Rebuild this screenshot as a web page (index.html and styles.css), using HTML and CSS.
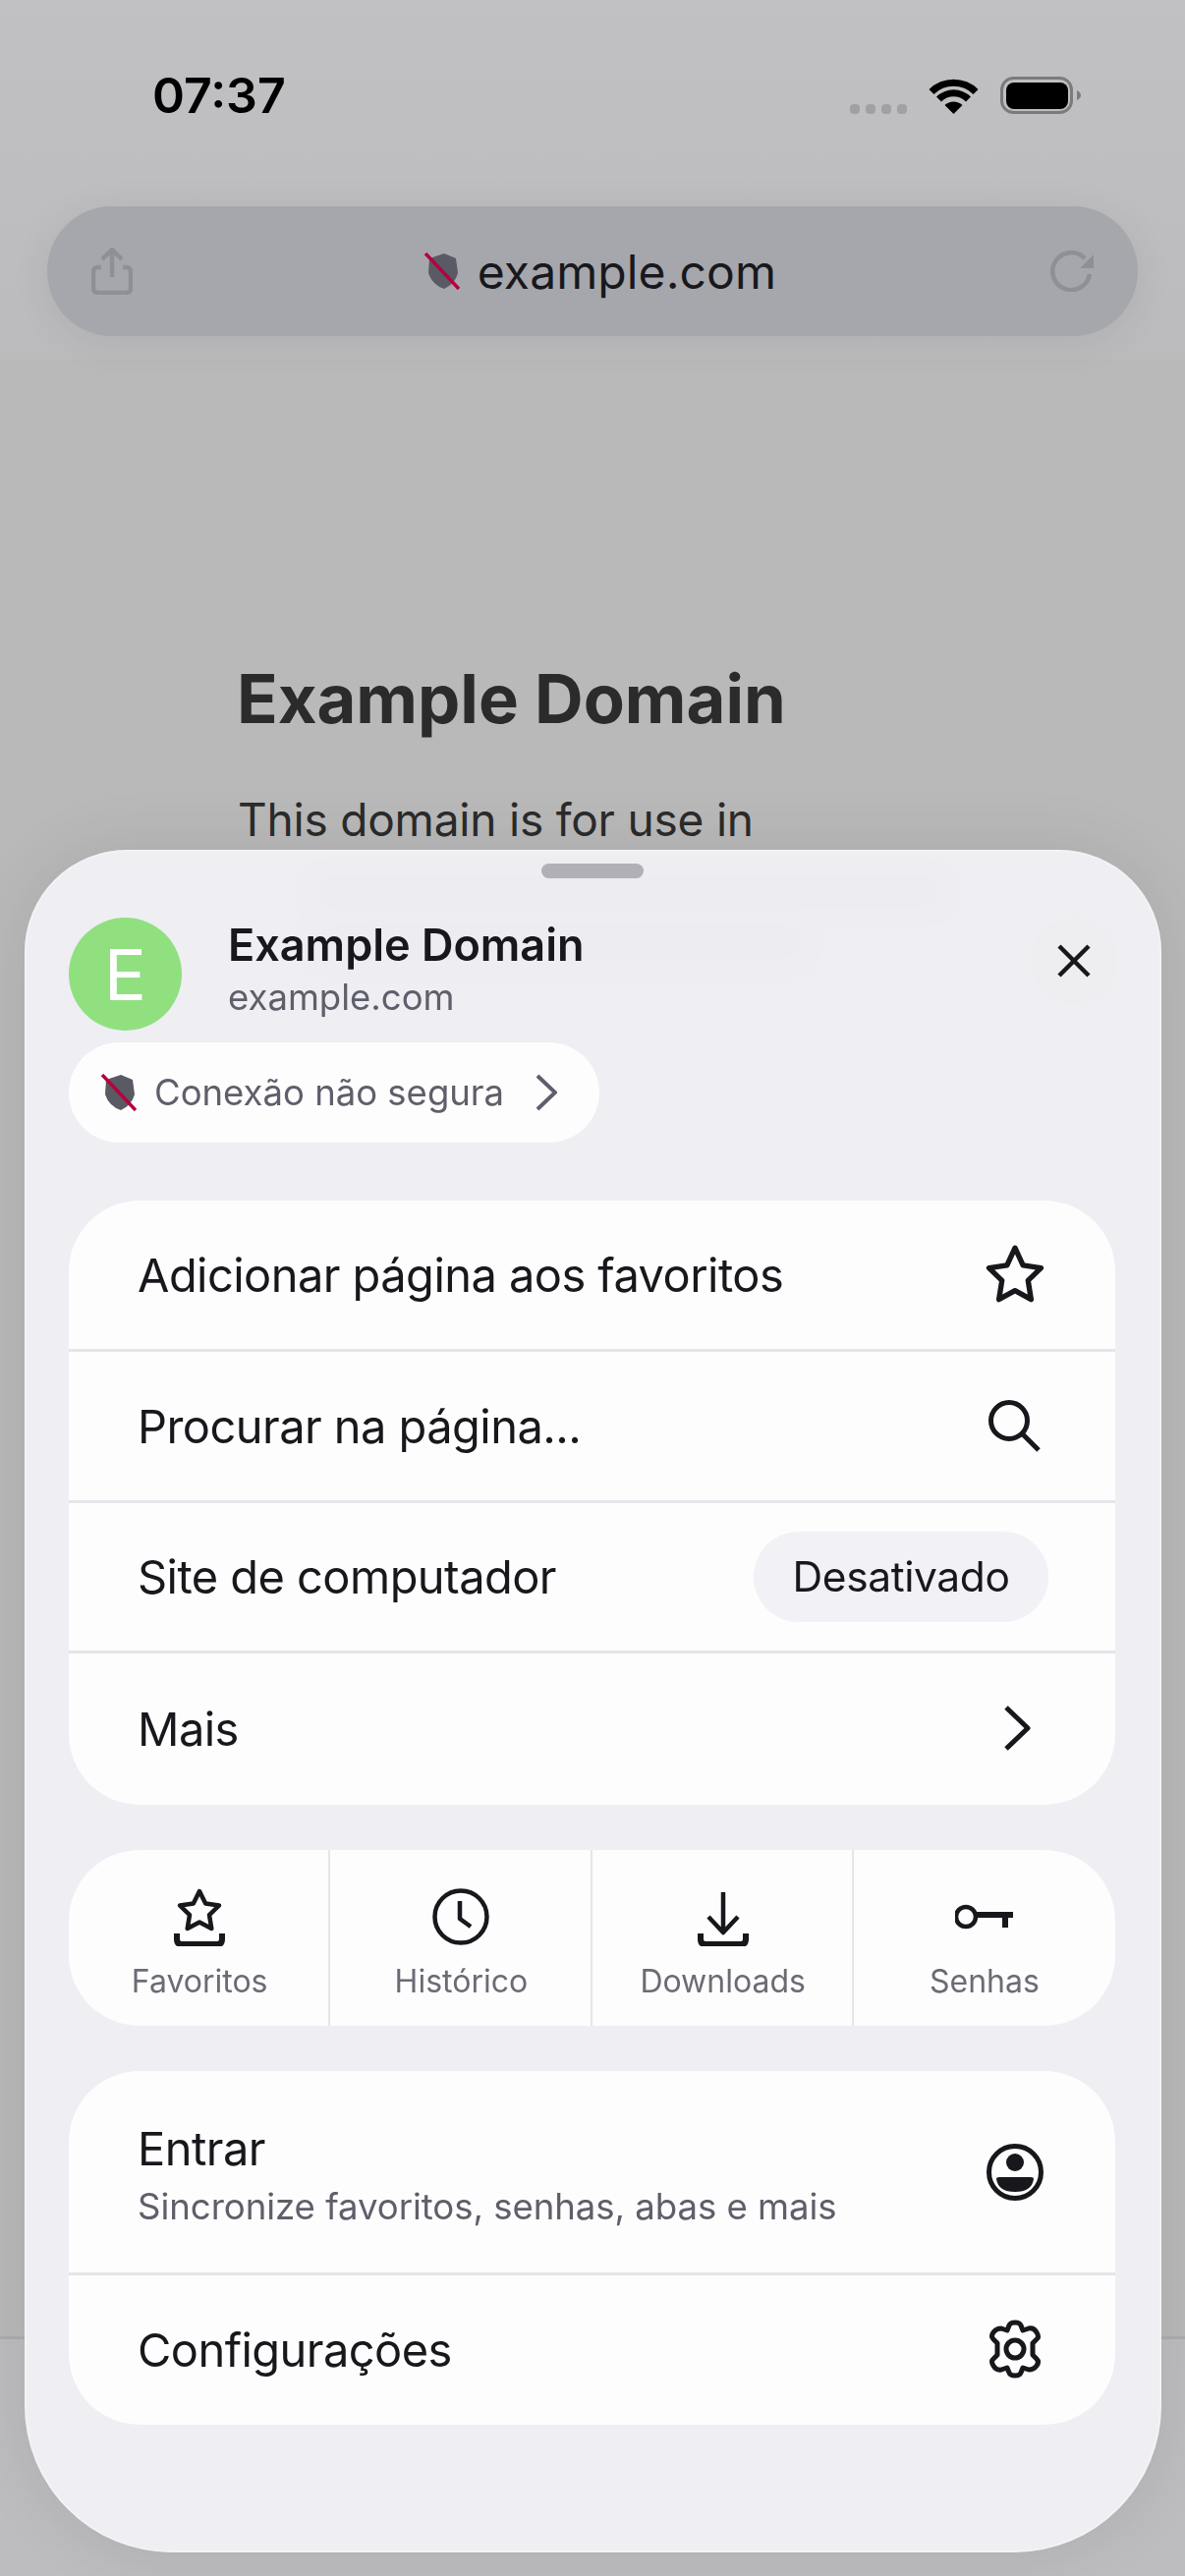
FILE: index.html
```html
<!DOCTYPE html>
<html lang="pt-BR">
<head>
  <meta charset="UTF-8">
  <title>Example Domain</title>
  <meta name="viewport" content="width=device-width,initial-scale=1"/>
  <link rel="stylesheet" href="styles.css">
</head>
<body>
<div class="page">
  <header class="top">
    <div class="status">
      <span class="time">07:37</span>
      <div class="status-icons">
        <div class="signal"><i></i><i></i><i></i><i></i></div>
        <svg class="wifi" viewBox="0 0 51 37">
          <path d="M.5 12A35.400 35.400 0 0 1 50.500 12L45.500 17A28.300 28.300 0 0 0 5.500 17Z"/>
          <path d="M8 19.500A25 25 0 0 1 43 19.500L38 24.500A17.500 17.500 0 0 0 13 24.500Z"/>
          <path d="M16.500 28A13 13 0 0 1 34.500 28L25.500 37Z"/>
        </svg>
        <svg class="battery" viewBox="0 0 82 38">
          <rect class="battery-edge" x="1.500" y="1.500" width="71" height="35" rx="12"/>
          <rect class="battery-fill" x="6" y="6" width="63" height="27" rx="8"/>
          <path class="battery-nub" d="M78 14q4 2 4 5t-4 5z"/>
        </svg>
      </div>
    </div>
    <div class="urlbar">
      <svg class="bar-icon share" viewBox="0 0 42 48">
        <path d="M10 20H7Q2 20 2 25V41Q2 46 7 46H35Q40 46 40 41V25Q40 20 35 20H32"/>
        <path d="M21 30V2M11 12 21 2 31 12"/>
      </svg>
      <div class="url">
        <svg class="shield" viewBox="0 0 36 38">
          <path class="shield-body" d="M5 6 20 1 32 6 34 21Q31 32 20 37 8 33 4 21Z"/>
          <path class="shield-slash" d="M1 1 35 37"/>
        </svg>
        <span>example.com</span>
      </div>
      <svg class="bar-icon reload" viewBox="0 0 44 42">
        <path d="M40 24A19 19 0 1 1 35 8"/>
        <path class="bar-arrow" d="M44 4V18H30Z"/>
      </svg>
    </div>
  </header>

  <main class="doc">
    <h1>Example Domain</h1>
    <p>This domain is for use in</p>
    <div class="ghost-line"></div>
    <div class="ghost-line ghost-short"></div>
  </main>

  <div class="bottom-bar"></div>

  <section class="sheet">
    <div class="grabber"></div>
    <div class="site">
      <div class="avatar">E</div>
      <div class="site-text">
        <div class="site-title">Example Domain</div>
        <div class="site-url">example.com</div>
      </div>
      <button class="close">
        <svg viewBox="0 0 34 34"><path d="M2 2 32 32M32 2 2 32"/></svg>
      </button>
    </div>
    <div class="secure">
      <svg class="shield" viewBox="0 0 36 38">
        <path class="shield-body" d="M5 6 20 1 32 6 34 21Q31 32 20 37 8 33 4 21Z"/>
        <path class="shield-slash" d="M1 1 35 37"/>
      </svg>
      <span>Conexão não segura</span>
      <svg class="secure-arrow" viewBox="0 0 22 38"><path d="M2 2 20 19 2 36"/></svg>
    </div>

    <div class="card">
      <div class="row">
        <span>Adicionar página aos favoritos</span>
        <svg class="row-icon" viewBox="2 2 56 56">
          <path d="M30 5 37.600 21.500 54.700 24 42.400 36 45.300 54 30 45.500 14.700 54 17.600 36 5.300 24 22.400 21.500Z"/>
        </svg>
      </div>
      <div class="row">
        <span>Procurar na página...</span>
        <svg class="row-icon" viewBox="0 0 60 60">
          <circle cx="24" cy="25" r="18.500"/>
          <path d="M37 38 54 55"/>
        </svg>
      </div>
      <div class="row">
        <span>Site de computador</span>
        <span class="chip">Desativado</span>
      </div>
      <div class="row">
        <span>Mais</span>
        <svg class="row-icon" viewBox="0 0 60 60">
          <path d="M21 9 43 30 21 51"/>
        </svg>
      </div>
    </div>

    <div class="card shortcuts">
      <div class="shortcut">
        <svg class="shortcut-icon" viewBox="0 0 60 60">
          <path d="M30 4 36.200 16.500 50 18.500 40 28.200 42.300 42 30 35.500 17.700 42 20 28.200 10 18.500 23.800 16.500Z"/>
          <path class="heavy" d="M7 47V53Q7 58 12 58H48Q53 58 53 53V47"/>
        </svg>
        <span>Favoritos</span>
      </div>
      <div class="shortcut">
        <svg class="shortcut-icon" viewBox="0 0 60 60">
          <circle cx="30" cy="30" r="26.500"/>
          <path d="M29 14V32L40 40"/>
        </svg>
        <span>Histórico</span>
      </div>
      <div class="shortcut">
        <svg class="shortcut-icon" viewBox="0 0 60 60">
          <path d="M30 5V46M15 30 30 46 45 30"/>
          <path class="heavy" d="M7 47V53Q7 58 12 58H48Q53 58 53 53V47"/>
        </svg>
        <span>Downloads</span>
      </div>
      <div class="shortcut">
        <svg class="shortcut-icon" viewBox="0 0 60 60">
          <circle cx="11" cy="30" r="10"/>
          <path class="heavy" d="M21 28H59M51 28V41"/>
        </svg>
        <span>Senhas</span>
      </div>
    </div>

    <div class="card">
      <div class="row row-tall">
        <div class="row-text">
          <span>Entrar</span>
          <span class="row-sub">Sincronize favoritos, senhas, abas e mais</span>
        </div>
        <svg class="row-icon" viewBox="0 0 60 60">
          <circle cx="30" cy="30" r="26.500"/>
          <circle class="solid" cx="30" cy="20" r="9"/>
          <path class="solid" d="M11 37Q11 35 14 35H46Q49 35 49 37 47 50 30 50 13 50 11 37Z"/>
        </svg>
      </div>
      <div class="row row-last">
        <span>Configurações</span>
        <svg class="row-icon" viewBox="0 0 60 60">
          <path d="M24 6Q25 3 30 3T36 6L38 11 44 9Q49 8 52 13T52 20L48 24 48 36 52 40Q55 43 52 47T44 51L38 49 36 54Q35 57 30 57T24 54L22 49 16 51Q11 52 8 47T8 40L12 36 12 24 8 20Q5 17 8 13T16 9L22 11Z"/>
          <circle cx="30" cy="30" r="9"/>
        </svg>
      </div>
    </div>
  </section>
</div>
</body>
</html>
```

FILE: styles.css
```css
* {
  box-sizing: border-box;
}

html,
body {
  margin: 0;
  padding: 0;
}

body {
  font-family: Inter, "Noto Sans", sans-serif;
  color: #17171c;
}

.page {
  position: relative;
  display: flex;
  flex-direction: column;
  width: 1206px;
  height: 2622px;
  overflow: hidden;
  background: #b9b9b9;
}

/* browser chrome */
.top {
  height: 366px;
  padding: 78px 48px 0;
  background: linear-gradient(#c1c1c3, #bbbbbd);
}

.status {
  display: flex;
  align-items: center;
  justify-content: space-between;
  height: 38px;
  padding: 0 58px 0 107px;
}

.time {
  font-size: 50px;
  font-weight: 600;
  color: #000;
  letter-spacing: 0;
}

.status-icons {
  display: flex;
  align-items: flex-end;
  gap: 22px;
}

.signal {
  display: flex;
  gap: 6px;
}

.signal i {
  width: 10px;
  height: 10px;
  border-radius: 4px;
  background: #a1a1a2;
}

.wifi {
  width: 51px;
  height: 37px;
  fill: #000;
}

.battery {
  width: 82px;
  height: 38px;
}

.battery-edge {
  fill: none;
  stroke: #7b7b7c;
  stroke-width: 3;
}

.battery-fill {
  fill: #000;
}

.battery-nub {
  fill: #7b7b7c;
}

.urlbar {
  display: flex;
  align-items: center;
  justify-content: space-between;
  height: 132px;
  margin-top: 94px;
  padding: 0 45px;
  border-radius: 66px;
  background: #a6a7ac;
  box-shadow: 0 6px 40px rgba(0, 0, 0, .07);
}

.bar-icon {
  fill: none;
  stroke: #8f9095;
  stroke-width: 4.500;
}

.bar-arrow {
  fill: #8f9095;
  stroke: none;
}

.share {
  width: 42px;
  height: 48px;
}

.reload {
  width: 44px;
  height: 42px;
}

.url {
  display: flex;
  align-items: center;
  gap: 18px;
  margin-left: 18px;
  font-size: 48px;
  letter-spacing: .1px;
  color: #18181d;
}

.shield {
  flex: none;
  width: 36px;
  height: 38px;
}

.shield-body {
  fill: #5a5a64;
}

.shield-slash {
  fill: none;
  stroke: #b5003f;
  stroke-width: 3.500;
}

/* page behind the sheet */
.doc {
  flex: 1;
  padding: 0 0 0 241px;
  color: #2b2b2b;
}

.doc h1 {
  margin: 306px 0 0;
  font-size: 68.700px;
  line-height: 78px;
  font-weight: 700;
}

.doc p {
  margin: 50px 0 0 1px;
  font-size: 46px;
  line-height: 68px;
  letter-spacing: -.2px;
}

.ghost-line {
  width: 640px;
  height: 28px;
  margin: 26px 0 0 78px;
  background: #8a8a8a;
}

.ghost-short {
  width: 500px;
  margin-top: 24px;
}

.bottom-bar {
  height: 244px;
  border-top: 3px solid #adadb0;
  background: #bdbdbf;
}

/* sheet */
.sheet {
  position: absolute;
  top: 865px;
  left: 25px;
  right: 24px;
  bottom: 24px;
  padding: 14px 47px 0 45px;
  border-radius: 104px 104px 150px 150px;
  background: rgba(240, 240, 245, .95);
  backdrop-filter: blur(14px);
  box-shadow: 0 0 70px rgba(0, 0, 0, .09), inset 0 0 0 2px rgba(255, 255, 255, .3);
}

.grabber {
  width: 104px;
  height: 15px;
  margin: 0 auto;
  border-radius: 8px;
  background: #b0b0b6;
}

.site {
  display: flex;
  align-items: center;
  gap: 47px;
  margin-top: 40px;
}

.avatar {
  display: flex;
  align-items: center;
  justify-content: center;
  flex: none;
  width: 115px;
  height: 115px;
  border-radius: 50%;
  background: #90e080;
  color: #fff;
  font-size: 72px;
}

.site-text {
  flex: 1;
  margin-top: -12px;
}

.site-title {
  font-size: 45px;
  line-height: 56px;
  font-weight: 600;
}

.site-url {
  margin-top: 2px;
  font-size: 36.500px;
  line-height: 46px;
  color: #5f5f6b;
}

.close {
  display: flex;
  align-items: center;
  justify-content: center;
  width: 86px;
  height: 86px;
  padding: 0;
  margin: -28px -1px 0 0;
  border: 0;
  border-radius: 50%;
  background: #eeeef0;
}

.close svg {
  width: 34px;
  height: 34px;
  fill: none;
  stroke: #17171c;
  stroke-width: 4.500;
}

.secure {
  display: inline-flex;
  align-items: center;
  height: 102px;
  width: 540px;
  margin-top: 12px;
  padding-left: 33px;
  border-radius: 51px;
  background: #fdfdfe;
  font-size: 36.500px;
  color: #5f5f6b;
}

.secure span {
  margin-left: 18px;
}

.secure-arrow {
  width: 22px;
  height: 38px;
  margin-left: 32px;
  fill: none;
  stroke: #5f5f6b;
  stroke-width: 4;
}

.card {
  margin-top: 46px;
  border-radius: 72px;
  background: #fdfdfe;
  overflow: hidden;
}

.secure + .card {
  margin-top: 59px;
}

.row {
  display: flex;
  align-items: center;
  justify-content: space-between;
  height: 153.750px;
  padding: 0 70px;
  border-bottom: 3px solid #e5e5ea;
  font-size: 47px;
  letter-spacing: -.55px;
}

.row:last-child {
  padding-bottom: 2px;
  border-bottom: 0;
}

.row-tall {
  height: 208px;
}

.row-last {
  height: 152px;
}

.row-text {
  display: flex;
  flex-direction: column;
  gap: 9px;
  margin-top: 4px;
}

.row-sub {
  font-size: 36.600px;
  letter-spacing: -.05px;
  color: #5f5f6b;
}

.row-icon {
  width: 60px;
  height: 60px;
  margin-right: 2px;
  fill: none;
  stroke: #17171c;
  stroke-width: 5;
  stroke-linejoin: round;
}

.row-icon .solid {
  fill: #17171c;
  stroke: none;
}

.chip {
  display: flex;
  align-items: center;
  justify-content: center;
  width: 300px;
  height: 92px;
  margin-right: -2px;
  border-radius: 46px;
  background: #f1f1f6;
  font-size: 42.500px;
  letter-spacing: -.4px;
}

.shortcuts {
  display: grid;
  grid-template-columns: repeat(4, 1fr);
  height: 179px;
}

.shortcut {
  display: flex;
  flex-direction: column;
  align-items: center;
  padding-top: 38px;
  margin-left: -2px;
  border-left: 2px solid #e5e5ea;
  font-size: 32px;
  color: #6b6b75;
}

.shortcut:first-child {
  margin-left: 0;
  border-left: 0;
}

.shortcut span {
  margin-top: 16px;
}

.shortcut-icon {
  width: 60px;
  height: 60px;
  fill: none;
  stroke: #17171c;
  stroke-width: 4.500;
  stroke-linejoin: round;
}

.shortcut-icon .heavy {
  stroke-width: 6;
}
```
